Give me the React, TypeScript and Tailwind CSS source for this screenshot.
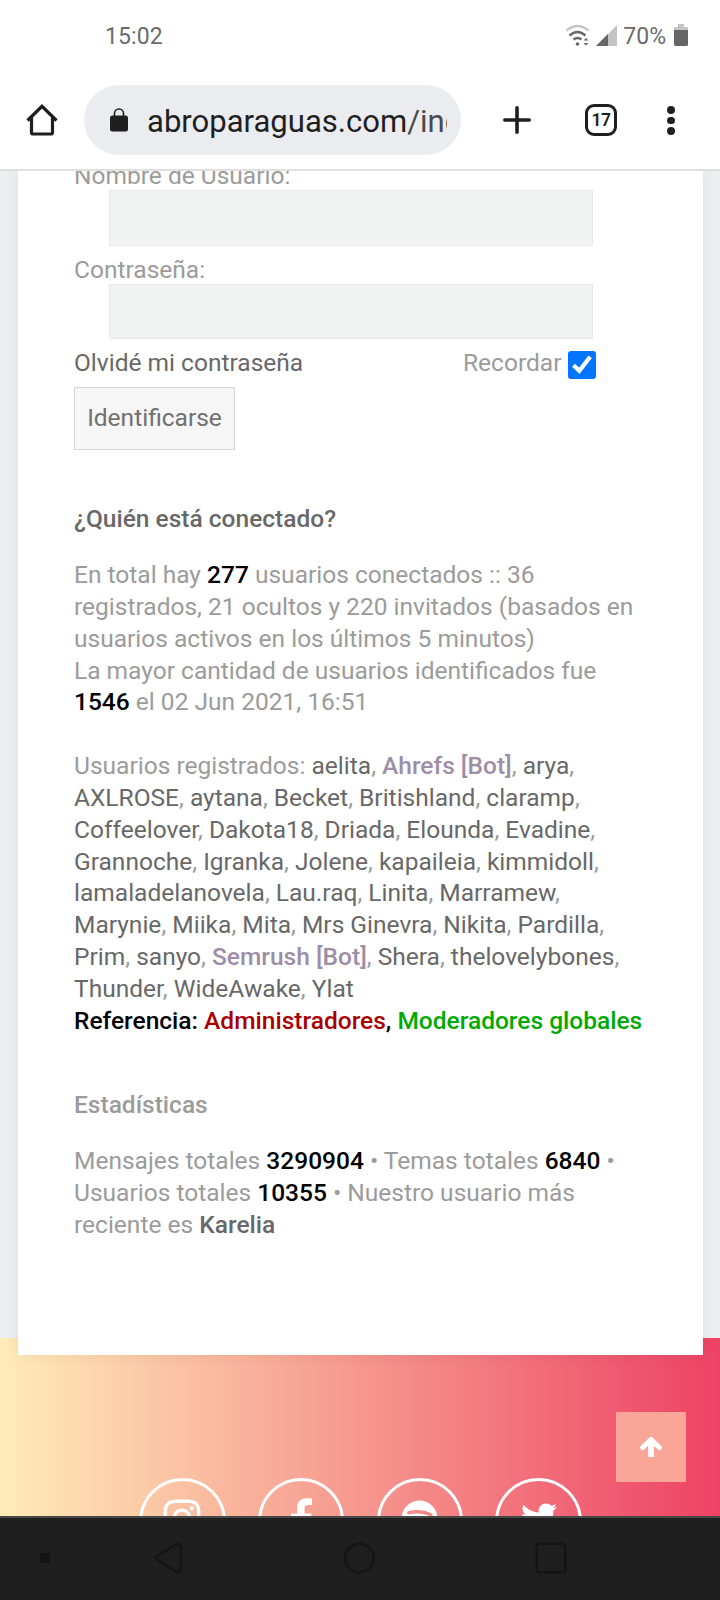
import type { ReactNode } from "react";
import { FaInstagram, FaSpotify, FaTwitter } from "react-icons/fa";

type OnlineUser = {
  name: string;
  bot?: boolean;
};

const onlineUserRows: OnlineUser[][] = [
  [{ name: "aelita" }, { name: "Ahrefs [Bot]", bot: true }, { name: "arya" }],
  [{ name: "AXLROSE" }, { name: "aytana" }, { name: "Becket" }, { name: "Britishland" }, { name: "claramp" }],
  [{ name: "Coffeelover" }, { name: "Dakota18" }, { name: "Driada" }, { name: "Elounda" }, { name: "Evadine" }],
  [{ name: "Grannoche" }, { name: "Igranka" }, { name: "Jolene" }, { name: "kapaileia" }, { name: "kimmidoll" }],
  [{ name: "lamaladelanovela" }, { name: "Lau.raq" }, { name: "Linita" }, { name: "Marramew" }],
  [{ name: "Marynie" }, { name: "Miika" }, { name: "Mita" }, { name: "Mrs Ginevra" }, { name: "Nikita" }, { name: "Pardilla" }],
  [{ name: "Prim" }, { name: "sanyo" }, { name: "Semrush [Bot]", bot: true }, { name: "Shera" }, { name: "thelovelybones" }],
  [{ name: "Thunder" }, { name: "WideAwake" }, { name: "Ylat" }]
];

function FacebookIcon() {
  return (
    <svg className="h-[41px] w-[21px]" viewBox="0 0 264 512" fill="currentColor">
      <path d="M76.7 512V283H0v-91h76.7v-71.7C76.7 42.4 124.3 0 193.8 0c33.3 0 61.9 2.5 70.2 3.6V85h-48.2c-37.8 0-45.1 18-45.1 44.3V192H256l-11.7 91h-73.6v229z" />
    </svg>
  );
}

const socialLinks = [
  { label: "Instagram", icon: <FaInstagram size={42} /> },
  { label: "Facebook", icon: <FacebookIcon /> },
  { label: "Spotify", icon: <FaSpotify size={37} /> },
  { label: "Twitter", icon: <FaTwitter size={36} /> }
];

function Strong({ children }: { children: ReactNode }) {
  return <strong className="font-medium text-black">{children}</strong>;
}

function StatusBar() {
  return (
    <div className="flex h-[75px] items-start justify-between pl-[105px] pr-[32px] pt-[23px] text-[23px] leading-[28px] text-[#6b6b6b]">
      <span className="tracking-[0.1px]">15:02</span>
      <div className="flex">
        <svg className="mt-[1px] h-[24px] w-[26px]" viewBox="0 0 26 24" fill="none" strokeWidth="2.4">
          <path d="M1.5 6.5 Q12.5 -2.5 23.5 6.5" stroke="#c4c4c4" />
          <path d="M4.5 11.5 Q12.5 4.5 20.5 11.5" stroke="#666" />
          <path d="M8.5 15.5 Q12.5 12.5 16.5 15.5" stroke="#666" />
          <circle cx="12.5" cy="20" r="1.8" fill="#666" />
          <path d="M18.5 16.5 L21 14 L23.5 16.5 Z M18.5 19 L21 21.5 L23.5 19 Z" fill="#666" />
        </svg>
        <svg className="ml-[5px] mt-[2px] h-[21px] w-[21px]" viewBox="0 0 21 21">
          <path d="M0 21 L21 0 V21 Z" fill="#c4c4c4" />
          <path d="M0 21 L12 9 V21 Z" fill="#666" />
        </svg>
        <span className="ml-[6px]">70%</span>
        <svg className="ml-[8px] mt-[1px] h-[22px] w-[14px]" viewBox="0 0 14 22">
          <path d="M4 0 H10 V3 H13 Q14 3 14 4 V7 H0 V4 Q0 3 1 3 H4 Z" fill="#c4c4c4" />
          <path d="M0 6 H14 V20.5 Q14 22 12.5 22 H1.5 Q0 22 0 20.5 Z" fill="#666" />
        </svg>
      </div>
    </div>
  );
}

function BrowserToolbar() {
  return (
    <div className="flex h-[96px] items-start border-b-2 border-[#e0e0e0] pt-[10px]">
      <button aria-label="Inicio" className="ml-[26px] mt-[19px]" type="button">
        <svg className="h-[32px] w-[32px]" viewBox="0 0 32 32" fill="none" stroke="#1f1f1f" strokeWidth="3.2">
          <path d="M1.5 16.5 L16 2.3 L30.5 16.5" />
          <path d="M5.5 13.5 V28.5 Q5.5 30 7 30 H25 Q26.5 30 26.5 28.5 V13.5" />
        </svg>
      </button>
      <div className="ml-[26px] flex h-[70px] w-[377px] items-center rounded-full bg-[#ebecf0] pl-[26px]">
        <svg className="h-[24px] w-[18px] shrink-0" viewBox="0 0 18 24">
          <path d="M4.5 9 V5.5 A4.5 4.5 0 0 1 13.5 5.5 V9" fill="none" stroke="#1f1f1f" strokeWidth="1.6" />
          <rect y="7.5" width="18" height="16" rx="2.5" fill="#1f1f1f" />
        </svg>
        <div className="ml-[19px] mt-[4px] w-[300px] overflow-hidden whitespace-nowrap text-[31.06px] leading-[40px] text-[#1f1f1f]">
          abroparaguas.com<span className="text-[#4a4a4a]">/index.php</span>
        </div>
      </div>
      <button aria-label="Nueva pestaña" className="ml-[42px] mt-[21px]" type="button">
        <svg className="h-[28px] w-[28px]" viewBox="0 0 28 28" stroke="#1f1f1f" strokeWidth="3.6" strokeLinecap="round">
          <path d="M14 1.8 V26.2 M1.8 14 H26.2" />
        </svg>
      </button>
      <button className="ml-[54px] mt-[19px] flex h-[32px] w-[32px] items-center justify-center rounded-[9px] border-3 border-[#1f1f1f] pt-[1px] text-[17.5px] font-semibold leading-none tracking-[-0.5px] text-[#1f1f1f]" type="button">
        17
      </button>
      <button aria-label="Menú" className="ml-[50px] mt-[21px] flex flex-col gap-[3px]" type="button">
        <span className="size-[7.5px] rounded-full bg-[#1f1f1f]" />
        <span className="size-[7.5px] rounded-full bg-[#1f1f1f]" />
        <span className="size-[7.5px] rounded-full bg-[#1f1f1f]" />
      </button>
    </div>
  );
}

function LoginForm() {
  return (
    <form>
      <label className="block" htmlFor="username">Nombre de Usuario:</label>
      <input className="ml-[35px] mt-[-2px] block h-[56px] w-[484px] border border-[#e8e8e8] bg-[#f1f3f3]" id="username" type="text" />
      <label className="mt-[8.5px] block" htmlFor="password">Contraseña:</label>
      <input className="ml-[35px] mt-[-2.5px] block h-[55px] w-[484px] border border-[#e8e8e8] bg-[#f1f3f3]" id="password" type="password" />
      <div className="mt-[8.5px] flex w-[522px] justify-between">
        <a className="text-[#686868]">Olvidé mi contraseña</a>
        <span className="flex">
          Recordar
          <span aria-checked="true" className="ml-[6.5px] mt-[3.5px] flex size-[28px] rounded-[3px] bg-[#0075ff]" role="checkbox">
            <svg className="size-[28px]" viewBox="0 0 28 28" fill="none" stroke="#fff" strokeWidth="4.2">
              <path d="M5.5 14.3 L11.3 19.8 L22.2 5.7" />
            </svg>
          </span>
        </span>
      </div>
      <button className="mt-[7.5px] block h-[63px] w-[161px] border border-[#d5d5d5] bg-[#f6f6f6] text-[#707070]" type="button">
        Identificarse
      </button>
    </form>
  );
}

function WhoIsOnline() {
  return (
    <section className="mt-[53.2px]">
      <h3 className="font-medium text-[#686868]">¿Quién está conectado?</h3>
      <p className="mt-[24px]">
        En total hay <Strong>277</Strong> usuarios conectados :: 36
        <br />
        registrados, 21 ocultos y 220 invitados (basados en
        <br />
        usuarios activos en los últimos 5 minutos)
        <br />
        La mayor cantidad de usuarios identificados fue
        <br />
        <Strong>1546</Strong> el 02 Jun 2021, 16:51
      </p>
      <div className="mt-[31.5px]">
        {onlineUserRows.map((row, rowIndex) => (
          <p key={row[0].name}>
            {rowIndex === 0 ? "Usuarios registrados: " : null}
            {row.map((user, index) => (
              <span key={user.name}>
                <a className={user.bot ? "font-medium text-[#9e8da7]" : "text-[#686868]"}>{user.name}</a>
                {rowIndex === onlineUserRows.length - 1 && index === row.length - 1 ? null : ", "}
              </span>
            ))}
          </p>
        ))}
        <p className="font-medium text-black">
          Referencia: <a className="text-[#aa0000]">Administradores</a>, <a className="text-[#00aa00]">Moderadores globales</a>
        </p>
      </div>
    </section>
  );
}

function Stats() {
  return (
    <section className="mt-[52.2px]">
      <h3 className="font-medium">Estadísticas</h3>
      <p className="mt-[24px]">
        Mensajes totales <Strong>3290904</Strong> • Temas totales <Strong>6840</Strong> •
        <br />
        Usuarios totales <Strong>10355</Strong> • Nuestro usuario más
        <br />
        reciente es <a className="font-medium text-[#686868]">Karelia</a>
      </p>
    </section>
  );
}

function Footer() {
  return (
    <footer className="relative -mt-[17px] h-[178px] bg-linear-to-r/srgb from-[#ffecb8] to-[#ed4264] pt-[140px]">
      <div className="ml-[139.2px] flex gap-[32.2px]">
        {socialLinks.map((link) => (
          <a aria-label={link.label} className="flex size-[86.5px] shrink-0 items-center justify-center rounded-full border-3 border-white pb-[6px] text-white" key={link.label}>
            {link.icon}
          </a>
        ))}
      </div>
      <button aria-label="Subir" className="absolute right-[34px] top-[74px] flex size-[70px] items-center justify-center bg-[#f9a698]" type="button">
        <svg className="size-[22px]" viewBox="0 0 22 22" fill="none" stroke="#fff" strokeLinejoin="round">
          <path d="M2.7 11.5 L11 3.5 L19.3 11.5" strokeLinecap="round" strokeWidth="5" />
          <path d="M11 4 V21" strokeWidth="5.8" />
        </svg>
      </button>
    </footer>
  );
}

function NavigationBar() {
  return (
    <nav className="h-[84px] border-t-2 border-[#484848] bg-[#1f1f1f]">
      <svg className="h-[82px] w-[720px]" viewBox="0 0 720 82" fill="none" stroke="#151515" strokeWidth="2.5" strokeLinejoin="round">
        <rect x="40" y="35" width="10" height="10" rx="1" fill="#151515" stroke="none" />
        <path d="M157 38 L176.5 26.3 Q181 24.5 181 29 V51 Q181 55.5 176.5 53.5 L157 42 Q154.5 40 157 38 Z" />
        <circle cx="359.5" cy="40" r="14.3" />
        <rect x="536.8" y="25.8" width="28.5" height="28.5" rx="2.5" />
      </svg>
    </nav>
  );
}

export default function App() {
  return (
    <div className="flex h-[1600px] w-[720px] flex-col overflow-hidden bg-white font-['Roboto',sans-serif]">
      <StatusBar />
      <BrowserToolbar />
      <main className="h-[1345px] overflow-hidden bg-[#ebeff0]">
        <div className="relative z-10 ml-[18px] h-[1184px] w-[685px] overflow-hidden whitespace-nowrap bg-white pl-[56px] text-[24.52px] leading-[31.9px] text-[#9b9b9b] shadow-[0_0_14px_rgba(0,0,0,0.07)]">
          <div className="-mt-[11px]">
            <LoginForm />
            <WhoIsOnline />
            <Stats />
          </div>
        </div>
        <Footer />
      </main>
      <NavigationBar />
    </div>
  );
}
